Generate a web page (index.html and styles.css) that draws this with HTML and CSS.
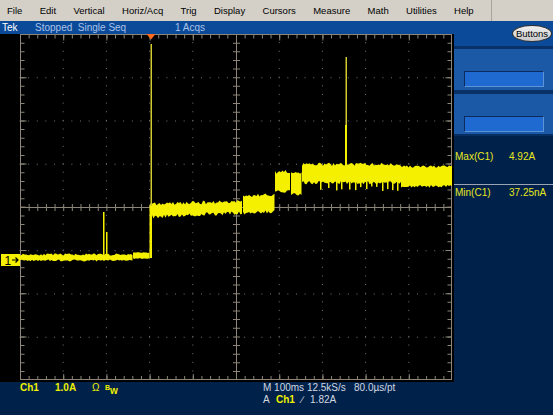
FILE: index.html
```html
<!DOCTYPE html>
<html>
<head>
  <title>Tek Scope</title>
  <link rel="stylesheet" href="styles.css">
</head>
<body>
  <div class="menubar">
    <span>File</span>
    <span>Edit</span>
    <span>Vertical</span>
    <span>Horiz/Acq</span>
    <span>Trig</span>
    <span>Display</span>
    <span>Cursors</span>
    <span>Measure</span>
    <span>Math</span>
    <span>Utilities</span>
    <span>Help</span>
    <span class="menu-sep"></span>
  </div>

  <div class="main">
    <div class="scope">
      <div class="status">
        <span class="tek">Tek</span>
        <span class="state">Stopped&nbsp; Single Seq</span>
        <span class="acqs">1 Acqs</span>
      </div>

      <svg class="screen" width="454" height="348" viewBox="0 34 454 348">
        <g class="grid">
          <!-- dotted division lines -->
          <g class="dots">
            <line x1="19.5" y1="77.75" x2="452" y2="77.75"/>
            <line x1="19.5" y1="121" x2="452" y2="121"/>
            <line x1="19.5" y1="164.25" x2="452" y2="164.25"/>
            <line x1="19.5" y1="250.75" x2="452" y2="250.75"/>
            <line x1="19.5" y1="294" x2="452" y2="294"/>
            <line x1="19.5" y1="337.25" x2="452" y2="337.25"/>
            <line x1="63.2" y1="33.5" x2="63.2" y2="380"/>
            <line x1="106.4" y1="33.5" x2="106.4" y2="380"/>
            <line x1="149.6" y1="33.5" x2="149.6" y2="380"/>
            <line x1="192.8" y1="33.5" x2="192.8" y2="380"/>
            <line x1="279.2" y1="33.5" x2="279.2" y2="380"/>
            <line x1="322.4" y1="33.5" x2="322.4" y2="380"/>
            <line x1="365.6" y1="33.5" x2="365.6" y2="380"/>
            <line x1="408.8" y1="33.5" x2="408.8" y2="380"/>
          </g>
          <!-- frame -->
          <rect class="frame" x="20.5" y="34.5" width="431" height="345"/>
          <!-- minor ticks on edges -->
          <g class="minor">
            <line x1="20" y1="36.5" x2="452" y2="36.5"/>
            <line x1="20" y1="378" x2="452" y2="378"/>
            <line x1="22.5" y1="34" x2="22.5" y2="380"/>
            <line x1="449.5" y1="34" x2="449.5" y2="380"/>
          </g>
          <!-- major ticks on edges -->
          <g class="major">
            <line x1="20" y1="37.5" x2="452" y2="37.5"/>
            <line x1="20" y1="377" x2="452" y2="377"/>
            <line x1="23.5" y1="34" x2="23.5" y2="380"/>
            <line x1="448.5" y1="34" x2="448.5" y2="380"/>
          </g>
          <!-- centre cross -->
          <line class="axis" x1="20" y1="207.5" x2="452" y2="207.5"/>
          <line class="axis" x1="236.5" y1="34" x2="236.5" y2="380"/>
          <line class="cross-h" x1="20" y1="207.5" x2="452" y2="207.5"/>
          <line class="cross-v" x1="236.5" y1="34" x2="236.5" y2="380"/>
        </g>

        <g class="trace"></g>

        <polygon class="trig" points="146.5,34 155.5,34 151,39.5"/>

        <g class="ch-marker">
          <rect x="1" y="254" width="19" height="12"/>
          <text x="4.5" y="264.5">1</text>
          <path d="M12 260 H18 M15.5 257.5 L18 260 L15.5 262.5"/>
        </g>
      </svg>

      <div class="readout">
        <div class="chan">
          <span class="ch1">Ch1</span>
          <span class="volts">1.0A</span>
          <span class="ohm">&Omega;</span>
          <span class="bw"><sup>B</sup>w</span>
        </div>
        <div class="timebase">
          <div><span class="tb">M 100ms 12.5kS/s</span><span>80.0&micro;s/pt</span></div>
          <div>A <span class="yel">Ch1</span> <span class="slope">&#8725;</span> 1.82A</div>
        </div>
      </div>
    </div>

    <div class="side">
      <div class="side-top">
        <div class="side-head">
          <span class="buttons">Buttons</span>
        </div>
        <div class="side-box"><div class="side-bar"></div></div>
        <div class="side-box second"><div class="side-bar"></div></div>
      </div>
      <div class="meas">
        <div class="meas-row"><span class="meas-name">Max(C1)</span><span>4.92A</span></div>
        <div class="meas-row min"><span class="meas-name">Min(C1)</span><span>37.25nA</span></div>
      </div>
    </div>
  </div>

  <script>
    // draw the captured waveform as noisy bands
    const trace = document.querySelector('.trace');
    const ns = 'http://www.w3.org/2000/svg';
    let seed = 11;
    function rand() {
      seed = (seed * 16807) % 2147483647;
      return (seed - 1) / 2147483646;
    }

    // x0, x1, top at x0, top at x1, bottom at x0, bottom at x1, jitter
    const bands = [
      [20, 133, 255.5, 255.5, 259.5, 259.5, 2],
      [133, 150.5, 253, 253, 258, 258, 1],
      [150.5, 243, 206, 203, 215, 211, 3.6],
      [243, 275, 198, 196, 211, 210, 3.6],
      [275, 291, 174, 173, 190, 190, 3.5],
      [291, 302, 175, 175, 193, 193, 3],
      [302, 401, 166, 166, 181, 181, 3.4],
      [401, 453, 168, 168, 185, 185, 2.8]
    ];

    bands.forEach(b => {
      const [x0, x1, t0, t1, b0, b1, j] = b;
      const top = [], bottom = [];
      for (let x = x0; x <= x1; x += 1.5) {
        const k = (x - x0) / (x1 - x0);
        top.push(x + ',' + (t0 + (t1 - t0) * k - rand() * j).toFixed(1));
        bottom.unshift(x + ',' + (b0 + (b1 - b0) * k + rand() * j).toFixed(1));
      }
      const poly = document.createElementNS(ns, 'polygon');
      poly.setAttribute('points', top.concat(bottom).join(' '));
      trace.appendChild(poly);
    });

    // downward glitches in the upper band
    [320, 328, 336, 341, 349, 355, 360, 366, 371, 376, 382, 387, 392, 397].forEach(x => {
      const r = document.createElementNS(ns, 'rect');
      r.setAttribute('x', x);
      r.setAttribute('y', 178);
      r.setAttribute('width', 1.5);
      r.setAttribute('height', 8 + rand() * 5);
      trace.appendChild(r);
    });

    // spikes: x, from, to, width, class
    const spikes = [
      [103, 258, 212, 1.5, ''],
      [106, 258, 232, 1.5, ''],
      [149.5, 258, 205, 2.5, ''],
      [150.5, 206, 44, 1.5, 'dim'],
      [345.5, 180, 57, 1.5, 'dim'],
      [345, 180, 125, 2, '']
    ];
    spikes.forEach(s => {
      const r = document.createElementNS(ns, 'rect');
      r.setAttribute('x', s[0]);
      r.setAttribute('y', s[2]);
      r.setAttribute('width', s[3]);
      r.setAttribute('height', s[1] - s[2]);
      if (s[4]) r.setAttribute('class', s[4]);
      trace.appendChild(r);
    });
  </script>
</body>
</html>
```

FILE: styles.css
```css
body {
  margin: 0;
  width: 553px;
  height: 415px;
  overflow: hidden;
  background-color: #00214a;
  font-family: "Liberation Sans", Arial, sans-serif;
}

.menubar {
  height: 21px;
  background-color: #d4d0c8;
  display: flex;
  align-items: center;
  gap: 17.4px;
  padding-left: 7px;
  box-sizing: border-box;
  font-size: 9.5px;
  color: #000;
}

.menu-sep {
  align-self: stretch;
  margin-left: auto;
  margin-right: 75px;
  border-left: 1px solid #a8a49c;
}

.main {
  display: flex;
  height: 394px;
}

.scope {
  width: 454px;
  display: flex;
  flex-direction: column;
}

.status {
  height: 13px;
  background-color: #0b4a98;
  display: flex;
  font-size: 10px;
  line-height: 13px;
  color: #a9c2ea;
}

.status .tek {
  width: 33px;
  padding-left: 2px;
  color: #fff;
}

.status .state {
  width: 140px;
}

.screen {
  display: block;
  background-color: #000;
}

.dots line {
  stroke: #767676;
  stroke-width: 1;
  stroke-dasharray: 1 7.64;
}

.frame {
  fill: none;
  stroke: #8c8578;
  stroke-width: 1;
}

.minor line {
  stroke: #8c8578;
  stroke-width: 4;
  stroke-dasharray: 1 7.64;
}

.major line {
  stroke: #8c8578;
  stroke-width: 6;
  stroke-dasharray: 1 42.2;
}

.axis {
  stroke: #8c8578;
  stroke-width: 1;
}

.cross-h,
.cross-v {
  stroke: #8c8578;
  stroke-width: 7;
  stroke-dasharray: 1 7.64;
}

.trace polygon,
.trace rect {
  fill: #f4f000;
}

.trace rect.dim {
  fill: #cfca2e;
}

.trig {
  fill: #ff6a1c;
}

.ch-marker rect {
  fill: #f4f000;
}

.ch-marker text {
  font-size: 12px;
  fill: #000;
}

.ch-marker path {
  fill: none;
  stroke: #000;
  stroke-width: 1.2;
}

.readout {
  flex: 1;
  display: flex;
  padding-left: 20px;
  font-size: 10px;
  line-height: 12px;
  color: #d2d8e0;
}

.chan {
  width: 243px;
  display: flex;
  color: #f0f000;
  font-weight: bold;
}

.chan .ch1 {
  width: 35px;
}

.chan .volts {
  width: 37px;
}

.chan .ohm {
  width: 13px;
  font-weight: normal;
}

.chan sup {
  font-size: 7px;
}

.timebase .tb {
  display: inline-block;
  width: 91px;
}

.yel {
  color: #f0f000;
  font-weight: bold;
  margin: 0 4px;
}

.slope {
  margin-right: 4px;
}

.side {
  width: 99px;
  display: flex;
  flex-direction: column;
}

.side-top {
  background-color: #0b4a98;
  border-bottom: 2px solid #072e60;
}

.side-head {
  height: 25px;
  display: flex;
  justify-content: flex-end;
  align-items: flex-start;
  padding-top: 4px;
  box-sizing: border-box;
}

.buttons {
  width: 40px;
  height: 17px;
  margin-right: 1px;
  box-sizing: border-box;
  border: 1px solid #303030;
  border-radius: 50%;
  background: linear-gradient(#f0f0f0, #c8c8c8);
  font-size: 9.5px;
  line-height: 15px;
  text-align: center;
  color: #000;
}

.side-box {
  border-top: 3px solid #0a3068;
  background-color: #1b58a6;
  padding: 22px 9px 0 10px;
  height: 19px;
}

.side-box.second {
  border-top-width: 4px;
  height: 18px;
}

.side-bar {
  height: 16px;
  box-sizing: border-box;
  background-color: #1f6ad0;
  border: 1px solid #5c92d6;
  border-top-color: #0a2b5c;
  border-left-color: #0a2b5c;
}

.meas {
  padding-top: 15px;
  font-size: 10px;
  line-height: 12px;
  color: #e8e820;
}

.meas-row {
  display: flex;
  padding-left: 1px;
  height: 33px;
}

.meas-name {
  width: 54px;
}

.meas-row.min {
  border-top: 1px solid #9aa4b4;
  padding-top: 2px;
}
```
